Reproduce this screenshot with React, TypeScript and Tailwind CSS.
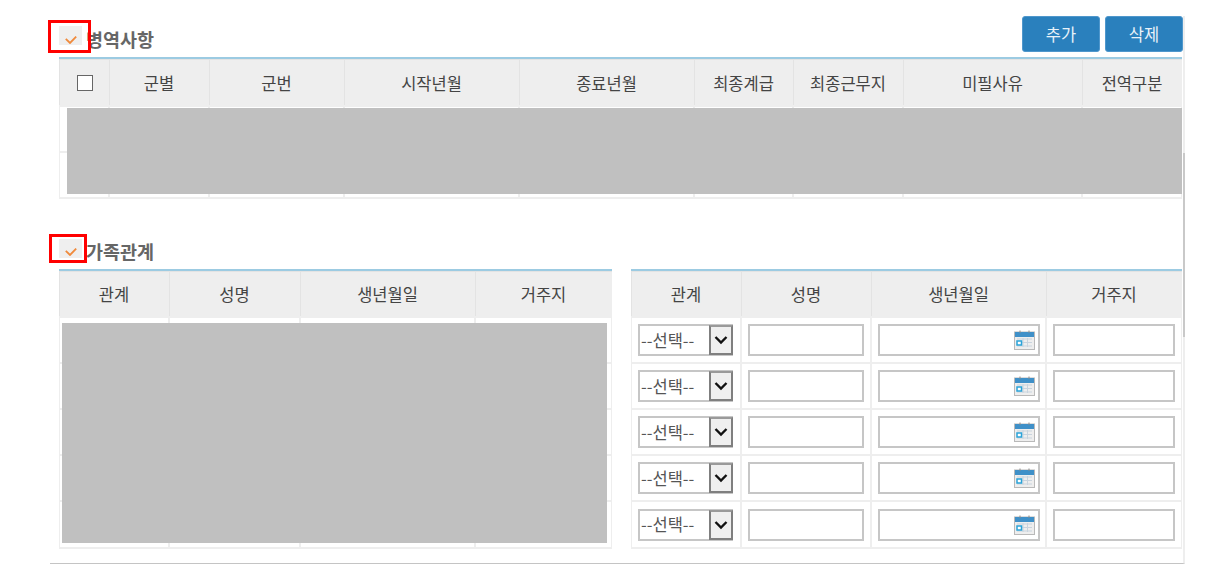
const military = [
  { label: '', width: 50 },
  { label: '군별', width: 100 },
  { label: '군번', width: 135 },
  { label: '시작년월', width: 175 },
  { label: '종료년월', width: 175 },
  { label: '최종계급', width: 99 },
  { label: '최종근무지', width: 110 },
  { label: '미필사유', width: 179 },
  { label: '전역구분', width: 100 },
];

const familyLeft = [
  { label: '관계', width: 110 },
  { label: '성명', width: 131 },
  { label: '생년월일', width: 175 },
  { label: '거주지', width: 137 },
];

const familyRight = [
  { label: '관계', width: 110 },
  { label: '성명', width: 130 },
  { label: '생년월일', width: 175 },
  { label: '거주지', width: 136 },
];

const thClass =
  'h-[46px] p-0 pt-[2px] bg-[#eeeeee] border border-[#e3e3e3] text-[16.5px] font-normal text-[#444444] text-center align-middle';
const tdClass = 'p-0 bg-white border-2 border-[#eeeeee] align-middle';
const inputClass = 'h-[32px] bg-white border-2 border-[#c6c6c6] outline-none';
const buttonClass =
  'w-[78px] h-[36px] bg-[#2a80bd] border border-[#4f97cc] rounded-[3px] text-[16.5px] text-[#e8f2f9]';

function SectionTitle({ text, titleTop }: { text: string; titleTop: string }) {
  return (
    <div className="flex items-start gap-[4px] ml-[9px]">
      <span className="flex items-center justify-center w-[23px] h-[19px] bg-[#efefef]">
        <svg width="12" height="8" viewBox="0 0 12 8" className="mt-[8px]">
          <path d="M0.8 2.8 L5 7 L11.2 0.6" fill="none" stroke="#f08a3c" strokeWidth="1.8" />
        </svg>
      </span>
      <h2 className={`${titleTop} text-[18.5px] font-bold text-[#666666] leading-none whitespace-nowrap`}>{text}</h2>
    </div>
  );
}

function CalendarIcon() {
  return (
    <svg width="21" height="20" viewBox="0 0 21 20">
      <rect x="0.5" y="2" width="20" height="17.5" fill="#eeeeee" stroke="#b9b9b9" />
      <rect x="1" y="2" width="19" height="5" fill="#3f90c8" />
      <path d="M6 0.5 V3 M15 0.5 V3" stroke="#8a8a8a" strokeWidth="1" />
      <path d="M3 9 H18 M3 12.5 H18 M3 16 H18 M9 8 V17 M13.5 8 V17" stroke="#c9d4de" strokeWidth="1" />
      <rect x="3" y="11" width="4.5" height="4" fill="#fff" stroke="#2ba3d8" strokeWidth="1.5" />
    </svg>
  );
}

function RelationSelect() {
  return (
    <div className="flex items-center justify-between w-[95px] h-[32px] bg-white border-2 border-[#c6c6c6]">
      <span className="pl-[1px] text-[16.5px] text-[#555555] whitespace-nowrap">--선택--</span>
      <span className="flex items-center justify-center w-[24px] h-[30px] -mr-[2px] bg-[#efefef] border-2 border-[#7f7f7f] border-t-[#9a9a9a]">
        <svg width="14" height="10" viewBox="0 0 14 10">
          <path d="M1.5 2 L7 7.5 L12.5 2" fill="none" stroke="#111111" strokeWidth="2.4" />
        </svg>
      </span>
    </div>
  );
}

export default function App() {
  return (
    <div className="w-[1219px] h-[577px] bg-white overflow-hidden font-['Noto_Sans_CJK_KR','Liberation_Sans',sans-serif]">
      <div className="relative ml-[50px] mt-[16px] w-[1135px] pb-[14px] border-b border-[#c4c4c4] border-r-2 border-r-[#eeeeee]">
        <div className="absolute right-[-2px] top-[137px] w-[2px] h-[184px] bg-[#c9c9c9]" />

        <div className="flex items-start justify-between h-[41px]">
          <div className="mt-[10px]">
            <SectionTitle text="병역사항" titleTop="mt-[4px]" />
          </div>
          <div className="flex gap-[5px]">
            <button className={buttonClass}>추가</button>
            <button className={buttonClass}>삭제</button>
          </div>
        </div>

        <div className="relative ml-[9px] w-[1123px] border-t-2 border-[#9ccbe2] overflow-hidden">
          <table className="w-full -ml-px table-fixed border-collapse">
            <colgroup>
              {military.map((col, i) => (
                <col key={i} style={{ width: col.width }} />
              ))}
            </colgroup>
            <thead>
              <tr>
                {military.map((col, i) => (
                  <th key={i} className={thClass}>
                    {i === 0 ? (
                      <span className="block ml-[17px] w-[16px] h-[16px] bg-white border border-[#666666]" />
                    ) : (
                      col.label
                    )}
                  </th>
                ))}
              </tr>
            </thead>
            <tbody>
              {[0, 1].map(row => (
                <tr key={row}>
                  {military.map((_, i) => (
                    <td key={i} className={`${tdClass} h-[46px]`} />
                  ))}
                </tr>
              ))}
            </tbody>
          </table>
          <div className="absolute left-[8px] top-[49px] w-[1115px] h-[86px] bg-[#c0c0c0]" />
        </div>

        <div className="h-[70px] pt-[40px]">
          <SectionTitle text="가족관계" titleTop="mt-[3px]" />
        </div>

        <div className="flex items-start ml-[9px] gap-[19px]">
          <div className="relative w-[553px] border-t-2 border-[#9ccbe2] overflow-hidden">
            <table className="w-full -ml-px table-fixed border-collapse">
              <colgroup>
                {familyLeft.map(col => (
                  <col key={col.label} style={{ width: col.width }} />
                ))}
              </colgroup>
              <thead>
                <tr>
                  {familyLeft.map(col => (
                    <th key={col.label} className={thClass}>{col.label}</th>
                  ))}
                </tr>
              </thead>
              <tbody>
                {[0, 1, 2, 3, 4].map(row => (
                  <tr key={row}>
                    {familyLeft.map(col => (
                      <td key={col.label} className={`${tdClass} ${row === 4 ? 'h-[47px]' : 'h-[46px]'}`} />
                    ))}
                  </tr>
                ))}
              </tbody>
            </table>
            <div className="absolute left-[3px] top-[52px] w-[545px] h-[220px] bg-[#c0c0c0]" />
          </div>

          <div className="w-[551px] border-t-2 border-[#9ccbe2] overflow-hidden">
            <table className="w-full -ml-px table-fixed border-collapse">
              <colgroup>
                {familyRight.map(col => (
                  <col key={col.label} style={{ width: col.width }} />
                ))}
              </colgroup>
              <thead>
                <tr>
                  {familyRight.map(col => (
                    <th key={col.label} className={thClass}>{col.label}</th>
                  ))}
                </tr>
              </thead>
              <tbody>
                {[0, 1, 2, 3, 4].map(row => (
                  <tr key={row} className={row === 4 ? 'h-[47px]' : 'h-[46px]'}>
                    <td className={tdClass}>
                      <div className="pl-[6px]">
                        <RelationSelect />
                      </div>
                    </td>
                    <td className={tdClass}>
                      <div className="pl-[6px]">
                        <div className={`${inputClass} w-[116px]`} />
                      </div>
                    </td>
                    <td className={tdClass}>
                      <div className="pl-[6px]">
                        <div className={`${inputClass} w-[162px] flex items-center justify-end pr-[3px]`}>
                          <CalendarIcon />
                        </div>
                      </div>
                    </td>
                    <td className={tdClass}>
                      <div className="pl-[6px]">
                        <div className={`${inputClass} w-[122px]`} />
                      </div>
                    </td>
                  </tr>
                ))}
              </tbody>
            </table>
          </div>
        </div>

        <div className="absolute left-[-2px] top-[4px] w-[43px] h-[33px] border-[3px] border-[#ff0000]" />
        <div className="absolute left-[-1px] top-[218px] w-[38px] h-[29px] border-[3px] border-[#ff0000]" />
      </div>
    </div>
  );
}
